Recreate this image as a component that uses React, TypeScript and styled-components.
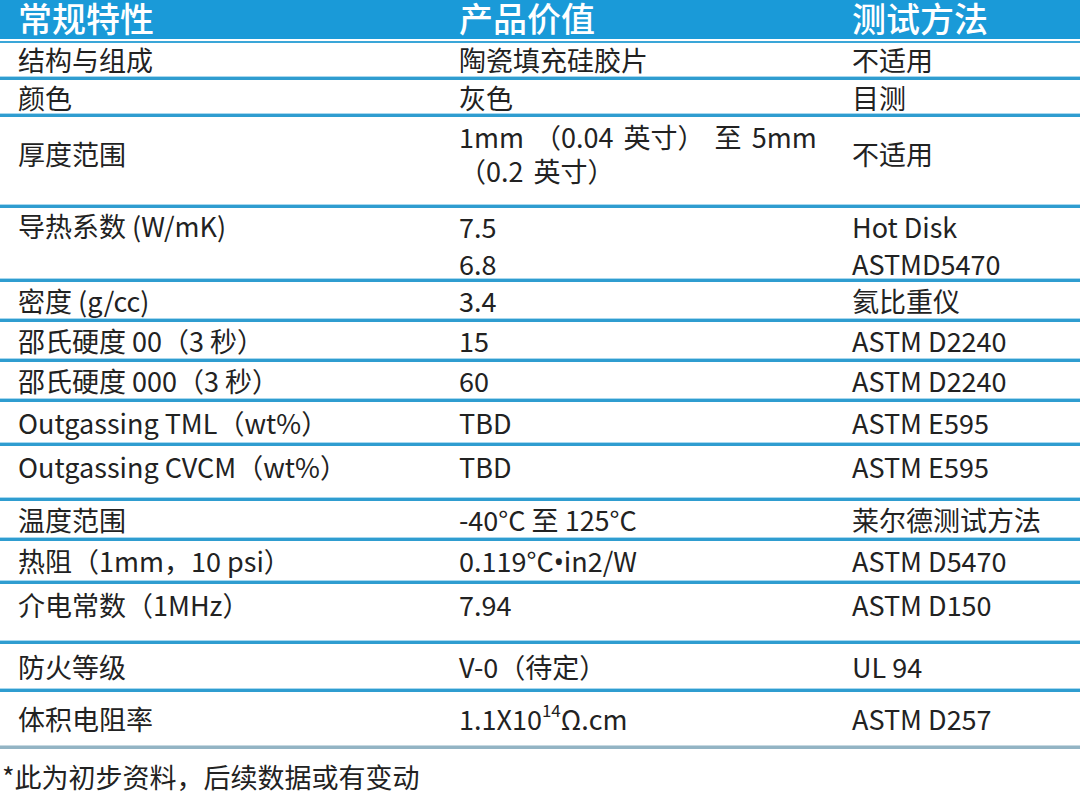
import React from "react";
import styled, { createGlobalStyle, css } from "styled-components";

const GlobalStyle = createGlobalStyle`
  html, body {
    margin: 0;
    padding: 0;
    background: #ffffff;
  }
  body {
    font-family: "Noto Sans CJK SC", "Noto Sans", sans-serif;
    color: #222222;
  }
`;

const Page = styled.div`
  width: 1080px;
  height: 804px;
  overflow: hidden;
  background: #ffffff;
`;

const Table = styled.div`
  display: flex;
  flex-direction: column;
`;

const Grid = css`
  display: grid;
  grid-template-columns: 441px 393px 1fr;
  box-sizing: border-box;
`;

const HeadRow = styled.div`
  ${Grid};
  height: 41px;
  background: #1a9ad8;
  border-bottom: 2px solid #ffffff;
  box-shadow: 0 2px 0 #3aa6d8;
  margin-bottom: 1px;
  align-items: center;
`;

const HeadCell = styled.div`
  padding-left: 18px;
  font-size: 34px;
  font-weight: 500;
  line-height: 36px;
  color: #ffffff;
  padding-bottom: 4px;
`;

const Row = styled.div<{ $h: number; $align: "center" | "start"; $pt?: number; $pb?: number; $last?: boolean }>`
  ${Grid};
  height: ${(p) => p.$h}px;
  align-items: ${(p) => p.$align};
  padding-top: ${(p) => p.$pt ?? 0}px;
  padding-bottom: ${(p) => p.$pb ?? 0}px;
  border-bottom: 3px solid ${(p) => (p.$last ? "#93b4c4" : "#2f9dd0")};
  box-shadow: inset 0 -1px 0 ${(p) => (p.$last ? "#c6d8e1" : "#a8d8ef")};
`;

const Cell = styled.div`
  padding-left: 18px;
  font-size: 27px;
  line-height: 36px;
  white-space: nowrap;
`;

const Wrap = styled.div<{ $gap: number; $spread?: boolean }>`
  line-height: ${(p) => p.$gap}px;
  word-spacing: ${(p) => (p.$spread ? 4 : 0)}px;
`;

const Sup = styled.sup`
  font-size: 17px;
  line-height: 0;
  vertical-align: 13px;
`;

const Dot = styled.span`
  font-family: "Noto Sans", "DejaVu Sans", sans-serif;
`;

const Note = styled.div`
  padding: 10px 0 0 2px;
  font-size: 27px;
  line-height: 36px;
`;

type RowData = {
  h: number;
  align: "center" | "start";
  pt?: number;
  pb?: number;
  cells: React.ReactNode[];
};

const rows: RowData[] = [
  { h: 38, align: "center", cells: ["结构与组成", "陶瓷填充硅胶片", "不适用"] },
  { h: 37, align: "center", cells: ["颜色", "灰色", "目测"] },
  {
    h: 91,
    align: "center",
    pb: 14,
    cells: [
      "厚度范围",
      <Wrap $gap={34} $spread key="t">
        1mm （0.04 英寸） 至 5mm
        <br />
        （0.2 英寸）
      </Wrap>,
      "不适用",
    ],
  },
  {
    h: 74,
    align: "start",
    pt: 0,
    cells: [
      "导热系数 (W/mK)",
      <Wrap $gap={37} key="k">
        7.5
        <br />
        6.8
      </Wrap>,
      <Wrap $gap={37} key="m">
        Hot Disk
        <br />
        ASTMD5470
      </Wrap>,
    ],
  },
  { h: 40, align: "center", cells: ["密度 (g/cc)", "3.4", "氦比重仪"] },
  { h: 40, align: "center", cells: ["邵氏硬度 00（3 秒）", "15", "ASTM D2240"] },
  { h: 40, align: "center", cells: ["邵氏硬度 000（3 秒）", "60", "ASTM D2240"] },
  { h: 44, align: "center", cells: ["Outgassing TML（wt%）", "TBD", "ASTM E595"] },
  { h: 55, align: "start", pt: 3, cells: ["Outgassing CVCM（wt%）", "TBD", "ASTM E595"] },
  { h: 40, align: "center", cells: ["温度范围", "-40°C 至 125°C", "莱尔德测试方法"] },
  {
    h: 43,
    align: "center",
    cells: [
      "热阻（1mm，10 psi）",
      <span key="c">
        0.119°C<Dot>•</Dot>in2/W
      </span>,
      "ASTM D5470",
    ],
  },
  { h: 60, align: "start", pt: 3, cells: ["介电常数（1MHz）", "7.94", "ASTM D150"] },
  { h: 48, align: "center", cells: ["防火等级", "V-0（待定）", "UL 94"] },
  {
    h: 57,
    align: "center",
    cells: [
      "体积电阻率",
      <span key="r">
        1.1X10<Sup>14</Sup>Ω.cm
      </span>,
      "ASTM D257",
    ],
  },
];

export default function App() {
  return (
    <Page>
      <GlobalStyle />
      <Table>
        <HeadRow>
          <HeadCell>常规特性</HeadCell>
          <HeadCell>产品价值</HeadCell>
          <HeadCell>测试方法</HeadCell>
        </HeadRow>
        {rows.map((r, i) => (
          <Row key={i} $h={r.h} $align={r.align} $pt={r.pt} $pb={r.pb} $last={i === rows.length - 1}>
            {r.cells.map((c, j) => (
              <Cell key={j}>{c}</Cell>
            ))}
          </Row>
        ))}
      </Table>
      <Note>*此为初步资料，后续数据或有变动</Note>
    </Page>
  );
}
